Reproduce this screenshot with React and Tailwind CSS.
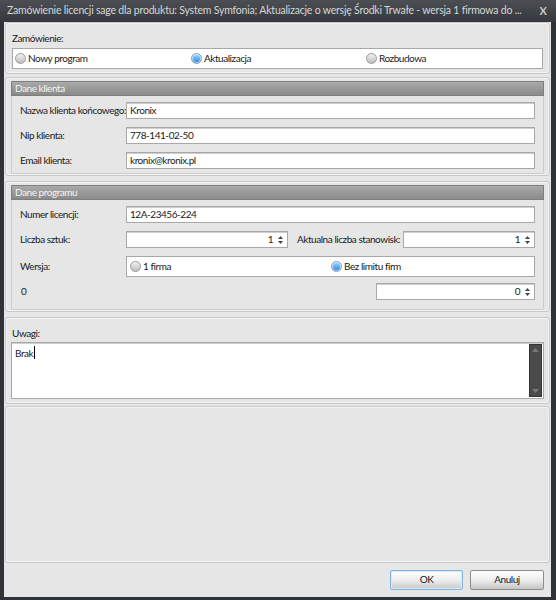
import React from "react";

const FONT = { fontFamily: 'Lato, "Liberation Sans", Arial, sans-serif' };

function Radio({ checked, label }) {
  return (
    <span className="flex items-center gap-[2px] whitespace-nowrap">
      <span
        className={`w-[11px] h-[11px] rounded-full border flex items-center justify-center ${
          checked
            ? "border-[#7c9fc4] bg-gradient-to-b from-[#dfeefc] to-[#9cc3ea]"
            : "border-[#9a9a9a] bg-gradient-to-b from-[#f2f2f2] to-[#bdbdbd]"
        }`}
      >
        {checked && (
          <span className="w-[7px] h-[7px] rounded-full bg-gradient-to-b from-[#8fd0ff] to-[#2f8fe0]" />
        )}
      </span>
      <span>{label}</span>
    </span>
  );
}

function Spin() {
  return (
    <span className="flex flex-col items-center justify-center gap-[2px] w-[9px] text-[#444]">
      <svg width="5" height="3" viewBox="0 0 5 3">
        <path d="M0 3 L2.5 0 L5 3 Z" fill="currentColor" />
      </svg>
      <svg width="5" height="3" viewBox="0 0 5 3">
        <path d="M0 0 L2.5 3 L5 0 Z" fill="currentColor" />
      </svg>
    </span>
  );
}

function Field({ children, className = "" }) {
  return (
    <div
      className={`h-[17px] bg-white border border-[#a8a8a8] shadow-[inset_0_1px_0_#cfcfcf] flex items-center px-[3px] whitespace-nowrap ${className}`}
    >
      {children}
    </div>
  );
}

function SpinField({ value, className = "" }) {
  return (
    <Field className={`justify-end gap-[3px] pr-[2px] ${className}`}>
      <span>{value}</span>
      <Spin />
    </Field>
  );
}

function Panel({ children, className = "" }) {
  return (
    <div
      className={`mx-[1px] rounded-[3px] border border-[#c9c9c9] shadow-[inset_0_0_0_1px_#f3f3f3] ${className}`}
    >
      {children}
    </div>
  );
}

function Header({ title }) {
  return (
    <div className="mx-[5px] mt-[3px] h-[15px] bg-gradient-to-b from-[#aaaaaa] to-[#8a8a8a] border border-[#7e7e7e] text-[#f4f4f4] flex items-center px-[3px]">
      {title}
    </div>
  );
}

function Row({ label, children }) {
  return (
    <div className="flex items-center h-[17px]">
      <span className="w-[106px] shrink-0 whitespace-nowrap">{label}</span>
      <div className="flex-1 flex items-center">{children}</div>
    </div>
  );
}

export default function App() {
  return (
    <div
      style={FONT}
      className="w-[556px] h-[600px] bg-[#2f3236] flex flex-col text-[10px] tracking-[-0.45px] text-[#1a1a1a] overflow-hidden"
    >
      <div className="h-[22px] shrink-0 bg-gradient-to-b from-[#4b4e53] to-[#35383c] flex items-center pl-[7px] pr-[9px] text-[#d6d6d6] text-[10.5px] tracking-[-0.2px]">
        <span className="flex-1 whitespace-nowrap overflow-hidden">
          Zamówienie licencji sage dla produktu: System Symfonia; Aktualizacje o wersję Środki Trwałe - wersja 1 firmowa do ...
        </span>
        <span className="text-[#c8c8c8] font-bold text-[11px] ml-[8px] tracking-normal">X</span>
      </div>

      <div className="flex-1 ml-[4px] mr-[5px] mb-[3px] bg-[#e6e6e6] flex flex-col">
        {/* Zamówienie */}
        <Panel className="h-[52px] px-[6px] pt-[9px]">
          <div className="leading-[12px] mb-[4px]">Zamówienie:</div>
          <div className="h-[21px] bg-white border border-[#a8a8a8] flex items-center px-[2px]">
            <div className="w-[176px]">
              <Radio label="Nowy program" />
            </div>
            <div className="w-[175px]">
              <Radio checked label="Aktualizacja" />
            </div>
            <Radio label="Rozbudowa" />
          </div>
        </Panel>

        {/* Dane klienta */}
        <Panel className="mt-[3px] h-[99px]">
          <Header title="Dane klienta" />
          <div className="mx-[5px] mb-[3px] px-[8px] pt-[6px] flex flex-col gap-[8px] border border-t-0 border-[#cdcdcd] h-[78px] rounded-b-[2px]">
            <Row label="Nazwa klienta końcowego:">
              <Field className="flex-1">Kronix</Field>
            </Row>
            <Row label="Nip klienta:">
              <Field className="flex-1">778-141-02-50</Field>
            </Row>
            <Row label="Email klienta:">
              <Field className="flex-1">kronix@kronix.pl</Field>
            </Row>
          </div>
        </Panel>

        {/* Dane programu */}
        <Panel className="mt-[5px] h-[131px]">
          <Header title="Dane programu" />
          <div className="mx-[5px] px-[8px] pt-[6px] flex flex-col border border-t-0 border-[#cdcdcd] h-[110px] rounded-b-[2px]">
            <Row label="Numer licencji:">
              <Field className="flex-1">12A-23456-224</Field>
            </Row>
            <div className="h-[8px]" />
            <Row label="Liczba sztuk:">
              <SpinField value="1" className="w-[162px]" />
              <span className="ml-[9px] w-[106px] whitespace-nowrap">Aktualna liczba stanowisk:</span>
              <SpinField value="1" className="flex-1" />
            </Row>
            <div className="h-[8px]" />
            <div className="flex items-center h-[21px]">
              <span className="w-[106px] shrink-0">Wersja:</span>
              <div className="flex-1 h-[21px] bg-white border border-[#a8a8a8] flex items-center px-[3px]">
                <div className="w-[201px]">
                  <Radio label="1 firma" />
                </div>
                <Radio checked label="Bez limitu firm" />
              </div>
            </div>
            <div className="h-[6px]" />
            <div className="flex items-center h-[17px]">
              <span className="flex-1 pl-[1px]">0</span>
              <SpinField value="0" className="w-[159px]" />
            </div>
          </div>
        </Panel>

        {/* Uwagi */}
        <Panel className="mt-[5px] h-[87px] px-[5px] pt-[9px]">
          <div className="leading-[12px] mb-[3px] ml-[1px]">Uwagi:</div>
          <div className="h-[57px] bg-white border border-[#a8a8a8] shadow-[inset_0_1px_0_#cfcfcf] flex">
            <div className="flex-1 px-[3px] pt-[3px] flex items-start">
              <span>Brak</span>
              <span className="w-[1px] h-[13px] bg-black ml-[1px]" />
            </div>
            <div className="w-[13px] my-[1px] mr-[1px] bg-[#4a4a4a] border border-[#333] flex flex-col justify-between items-center py-[3px]">
              <svg width="7" height="4" viewBox="0 0 7 4">
                <path d="M0 4 L3.5 0 L7 4 Z" fill="#777" />
              </svg>
              <svg width="7" height="4" viewBox="0 0 7 4">
                <path d="M0 0 L3.5 4 L7 0 Z" fill="#777" />
              </svg>
            </div>
          </div>
        </Panel>

        {/* empty */}
        <Panel className="mt-[2px] flex-1" />

        <div className="h-[34px] shrink-0 flex items-center justify-end gap-[7px] pr-[7px] pb-[1px]">
          <button className="w-[73px] h-[20px] rounded-[2px] border border-[#7fb3dd] bg-gradient-to-b from-[#ffffff] via-[#eeeeee] to-[#c9c9c9] shadow-[inset_0_0_0_1px_#d6ecfb]">
            OK
          </button>
          <button className="w-[74px] h-[20px] rounded-[2px] border border-[#8f8f8f] bg-gradient-to-b from-[#ffffff] via-[#eeeeee] to-[#c4c4c4]">
            Anuluj
          </button>
        </div>
      </div>
    </div>
  );
}
